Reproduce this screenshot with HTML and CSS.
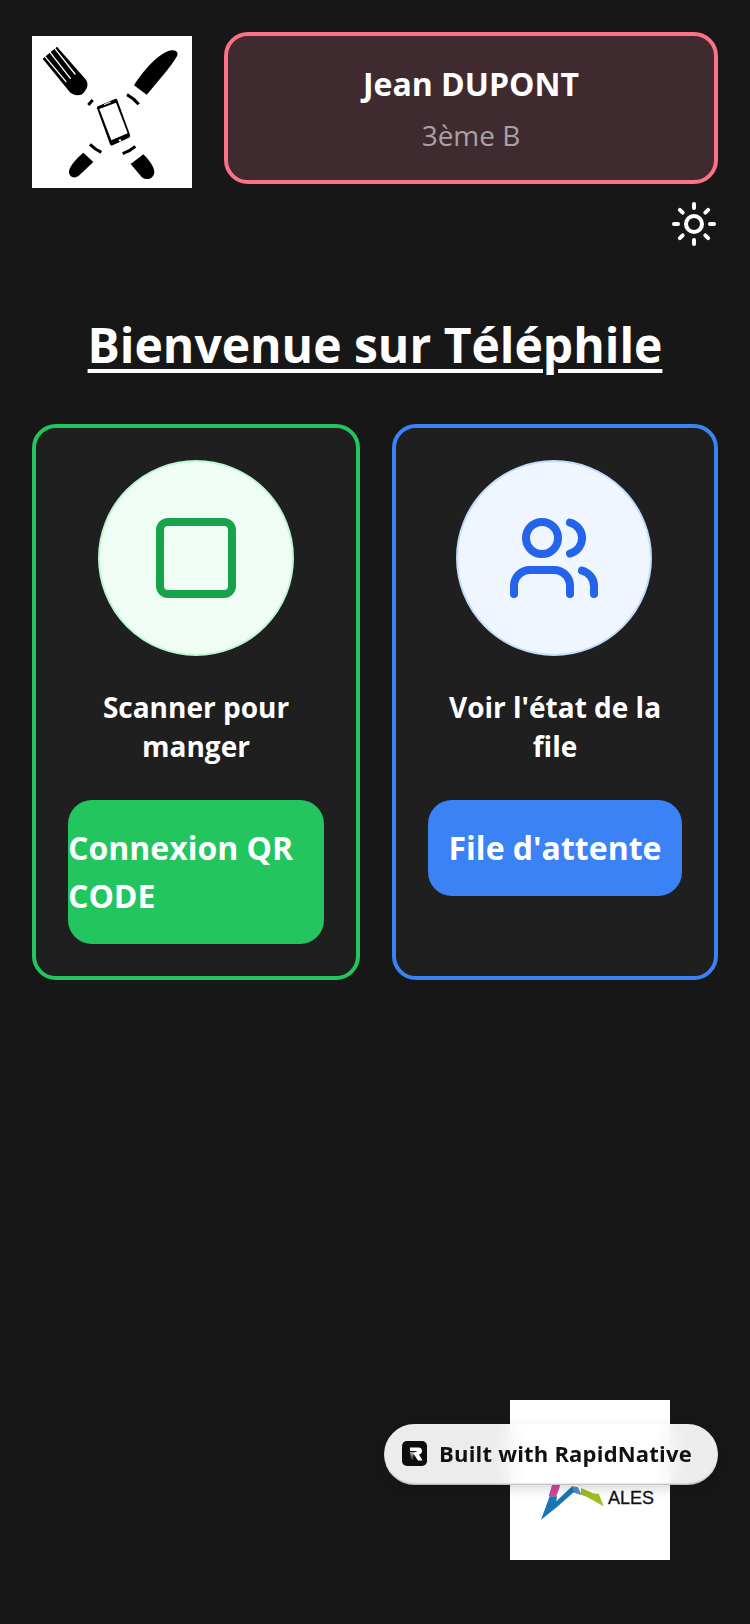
FILE: index.html
```
<!DOCTYPE html>
<html lang="fr">
<head>
    <meta charset="UTF-8">
    <meta name="viewport" content="width=device-width, initial-scale=1.0">
    <title>Téléphile</title>
    <link rel="stylesheet" href="styles.css">
</head>
<body>
    <div class="page">
        <div class="header">
            <svg class="logo" viewBox="6 0 480 456">
                <rect x="6" y="0" width="480" height="456" fill="#fff"/>
                <!-- fork -->
                <path d="M38 68 L116 164 C126 178 150 183 161 170 C173 157 177 143 166 129 L81 32Z" fill="#000"/>
                <g stroke="#fff" stroke-width="4" stroke-linecap="round">
                    <line x1="42" y1="58" x2="108" y2="137"/>
                    <line x1="56" y1="44" x2="121" y2="127"/>
                    <line x1="70" y1="32" x2="135" y2="114"/>
                </g>
                <!-- knife -->
                <path d="M312 148 C340 105 385 50 425 43 C440 41 447 52 440 62 C420 95 385 135 350 176Z" fill="#000"/>
                <!-- handle ends -->
                <path d="M160 350 L190 378 L148 418 C134 430 116 424 117 405 C118 392 140 366 160 350Z" fill="#000"/>
                <path d="M340 355 L302 384 L335 423 C348 435 372 430 373 408 C372 390 355 370 340 355Z" fill="#000"/>
                <g stroke="#000" stroke-width="9" fill="none">
                    <path d="M175 207 L188 192"/>
                    <path d="M291 176 Q311 187 326 205"/>
                    <path d="M180 325 Q195 340 214 349"/>
                    <path d="M278 353 Q300 345 316 331"/>
                </g>
                <!-- phone -->
                <path d="M204 211 L255 189 Q260 187 262 192 L300 296 Q302 302 297 305 L248 328 Q242 330 240 325 L201 217 Q200 213 204 211Z" fill="#000"/>
                <path d="M208 219 L258 200 L293 292 L244 313Z" fill="#fff"/>
                <line x1="222" y1="206" x2="242" y2="198" stroke="#fff" stroke-width="3"/>
                <circle cx="270" cy="313" r="3.500" fill="#fff"/>
            </svg>
            <div class="user-card">
                <div class="user-name">Jean DUPONT</div>
                <div class="user-class">3ème B</div>
            </div>
        </div>

        <div class="theme-row">
            <svg class="icon-sun" viewBox="0 0 24 24" fill="none" stroke="#fff" stroke-width="2" stroke-linecap="round" stroke-linejoin="round">
                <circle cx="12" cy="12" r="4"/>
                <path d="M12 2v2"/><path d="M12 20v2"/>
                <path d="m4.930 4.930 1.410 1.410"/><path d="m17.660 17.660 1.410 1.410"/>
                <path d="M2 12h2"/><path d="M20 12h2"/>
                <path d="m6.340 17.660-1.410 1.410"/><path d="m19.070 4.930-1.410 1.410"/>
            </svg>
        </div>

        <h1 class="title">Bienvenue sur Téléphile</h1>

        <div class="cards">
            <div class="card card-green">
                <div class="circle circle-green">
                    <svg class="icon" viewBox="0 0 24 24" fill="none" stroke="#16a34a" stroke-width="2" stroke-linecap="round" stroke-linejoin="round">
                        <rect x="3" y="3" width="18" height="18" rx="2"/>
                    </svg>
                </div>
                <div class="card-text">Scanner pour manger</div>
                <div class="btn btn-green">Connexion QR CODE</div>
            </div>
            <div class="card card-blue">
                <div class="circle circle-blue">
                    <svg class="icon" viewBox="0 0 24 24" fill="none" stroke="#2563eb" stroke-width="2" stroke-linecap="round" stroke-linejoin="round">
                        <path d="M16 21v-2a4 4 0 0 0-4-4H6a4 4 0 0 0-4 4v2"/>
                        <circle cx="9" cy="7" r="4"/>
                        <path d="M22 21v-2a4 4 0 0 0-3-3.870"/>
                        <path d="M16 3.130a4 4 0 0 1 0 7.750"/>
                    </svg>
                </div>
                <div class="card-text">Voir l'état de la file</div>
                <div class="btn btn-blue">File d'attente</div>
            </div>
        </div>

        <div class="footer">
            <div class="ales-logo">
                <svg class="ales-mark" viewBox="500 310 210 120">
                    <path d="M535 350 L545 316 L570 316 L558 350Z" fill="#d1479a"/>
                    <path d="M512 420 L538 350 L560 350 L558 365 L605 320 L632 345 L610 338 L560 382Z" fill="#1a75b5"/>
                    <path d="M605 320 L622 322 L634 345 L612 339Z" fill="#4f8fc4"/>
                    <path d="M632 325 L672 342 L685 342 L700 380 L650 352 L632 345Z" fill="#9dbf1e"/>
                </svg>
                <span class="ales-text">ALES</span>
            </div>
        </div>

        <div class="built-with">
            <svg class="rn-icon" viewBox="0 0 25 25">
                <defs>
                    <linearGradient id="rn-fade" x1="0" y1="0" x2="0" y2="1">
                        <stop offset="0" stop-color="#bbb"/>
                        <stop offset="1" stop-color="#222"/>
                    </linearGradient>
                </defs>
                <rect width="25" height="25" rx="5" fill="#0d0d0d"/>
                <path d="M8 11h4l-1 8H9z" fill="url(#rn-fade)"/>
                <path d="M8 6.500h8.500q3.500 0 3.500 3.500 0 2.500-3 3.500l3.500 6h-4.500l-5-7.500 4.500-2H8z" fill="#fff"/>
            </svg>
            <span>Built with RapidNative</span>
        </div>
    </div>
</body>
</html>
```

FILE: styles.css
```
* {
    margin: 0;
    padding: 0;
    box-sizing: border-box;
}

body {
    font-family: "Open Sans", sans-serif;
    background-color: #171717;
}

.page {
    position: relative;
    height: 1624px;
    padding: 32px 32px 64px;
    display: flex;
    flex-direction: column;
}

.header {
    display: flex;
    gap: 32px;
}

.logo {
    width: 160px;
    height: 152px;
    margin-top: 4px;
    flex-shrink: 0;
}

.user-card {
    flex: 1;
    height: 152px;
    background: #3f2a2f;
    border: 4px solid #fb7185;
    border-radius: 24px;
    display: flex;
    flex-direction: column;
    align-items: center;
    padding-top: 24px;
}

.user-name {
    color: #fff;
    font-size: 32px;
    font-weight: 700;
    line-height: 48px;
    margin-bottom: 7px;
}

.user-class {
    color: #a8a0a6;
    font-size: 28px;
    line-height: 40px;
}

.theme-row {
    display: flex;
    justify-content: flex-end;
    margin-top: 12px;
}

.icon-sun {
    width: 48px;
    height: 48px;
}

.title {
    color: #fff;
    font-size: 48px;
    font-weight: 700;
    line-height: 64px;
    text-align: center;
    text-decoration: underline;
    text-decoration-thickness: 4px;
    text-underline-offset: 6px;
    margin-top: 65px;
}

.cards {
    display: grid;
    grid-template-columns: 328px 326px;
    gap: 32px;
    margin-top: 47px;
}

.card {
    height: 556px;
    background: #1f1f1f;
    border: 4px solid;
    border-radius: 24px;
    padding: 32px;
    display: flex;
    flex-direction: column;
    align-items: center;
}

.card-green {
    border-color: #22c55e;
}

.card-blue {
    border-color: #3b82f6;
}

.circle {
    width: 196px;
    height: 196px;
    flex-shrink: 0;
    border-radius: 50%;
    border: 2px solid;
    display: flex;
    align-items: center;
    justify-content: center;
}

.circle-green {
    background: #f0fdf4;
    border-color: #bbf7d0;
}

.circle-blue {
    background: #eff6ff;
    border-color: #bfdbfe;
    margin-right: 2px;
}

.icon {
    width: 96px;
    height: 96px;
}

.card-text {
    color: #fff;
    font-size: 28px;
    font-weight: 700;
    line-height: 39px;
    text-align: center;
    margin-top: 32px;
}

.btn {
    width: 100%;
    margin-top: 34px;
    padding: 24px 0;
    border-radius: 24px;
    color: #fff;
    font-size: 32px;
    font-weight: 700;
    line-height: 48px;
}

.btn-green {
    background: #22c55e;
}

.btn-blue {
    background: #3b82f6;
    text-align: center;
}

.footer {
    margin-top: auto;
    display: flex;
    justify-content: flex-end;
    padding-right: 48px;
}

.ales-logo {
    position: relative;
    width: 160px;
    height: 160px;
    background: #fff;
}

.ales-mark {
    position: absolute;
    left: 26.670px;
    top: 83.330px;
    width: 70px;
    height: 40px;
}

.ales-text {
    position: absolute;
    left: 98px;
    top: 86px;
    color: #111;
    font-family: "Liberation Sans", sans-serif;
    font-size: 18px;
    line-height: 24px;
    -webkit-text-stroke: 0.3px #111;
}

.built-with {
    position: absolute;
    left: 384px;
    top: 1424px;
    width: 334px;
    height: 61px;
    border-radius: 31px;
    background: rgba(255, 255, 255, 0.92);
    backdrop-filter: blur(10px);
    box-shadow: 0 4px 12px rgba(0, 0, 0, 0.15), inset 0 -2px 2px -1px rgba(0, 0, 0, 0.3);
    display: flex;
    align-items: center;
    gap: 12px;
    padding-left: 18px;
    padding-bottom: 3px;
    color: #111;
    font-size: 22px;
    font-weight: 700;
    letter-spacing: 0.2px;
}

.rn-icon {
    width: 25px;
    height: 25px;
    flex-shrink: 0;
}
```
